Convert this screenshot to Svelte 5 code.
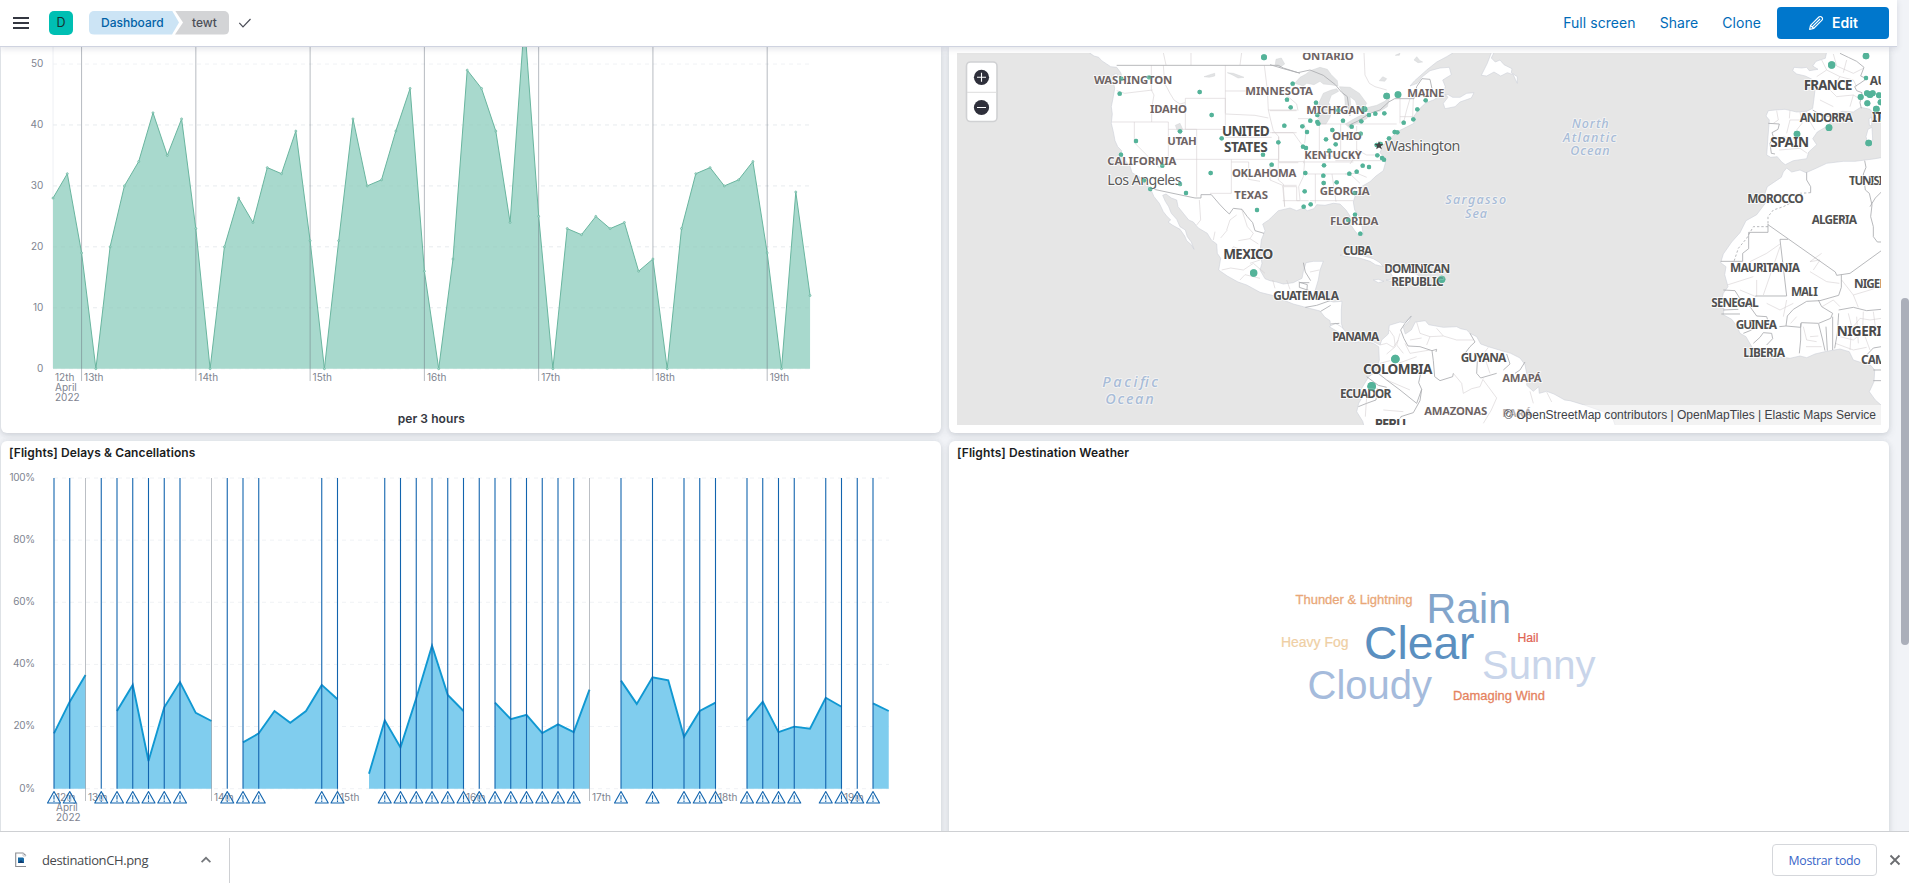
<script>
  // ---- Flight count chart ----
  const counts = [28,32,19,0,20,30,34,42,35,41,23,0,20,28,24,33,32,39,21,0,21,41,30,31,39,46,16,0,18,49,46,39,24,57,25,0,23,22,25,23,24,16,18,0,23,32,33,30,31,34,19,0,29,12];
  const cx = (i) => 53 + i * 14.284;
  const cy = (v) => 368.7 - v * 6.093;
  const countLine = counts.map((v, i) => `${cx(i).toFixed(1)},${cy(v).toFixed(1)}`).join(' ');
  const countArea = `53,368.7 ${countLine} ${cx(53)},368.7`;
  const days = [[2, '13th'], [10, '14th'], [18, '15th'], [26, '16th'], [34, '17th'], [42, '18th'], [50, '19th']];

  // ---- Delays chart ----
  const dx = (i) => 54 + i * 15.75;
  const dy = (v) => 788.7 - v * 3.107;
  const segments = [
    [0, [17.8, 28, 36.6]],
    [4, [25, 33.4, 8.9, 26.2, 34.3, 24.4, 21.8]],
    [12, [14.9, 17.8, 25, 21.2, 25, 33.4, 28.8]],
    [20, [4.8, 22, 13.3, 29.1, 46, 30.2, 25]],
    [28, [27.7, 22.4, 23.8, 17.9, 20.7, 18.2, 31.9]],
    [36, [34.8, 27.3, 35.9, 34.9, 16.7, 25, 27.7]],
    [44, [21.9, 28, 18.2, 20, 19.3, 29.3, 26.4]],
    [52, [27.5, 25]]
  ].map(([start, vals]) => {
    const line = vals.map((v, i) => `${dx(start + i)},${dy(v).toFixed(1)}`).join(' ');
    return { line, area: `${dx(start)},788.7 ${line} ${dx(start + vals.length - 1)},788.7` };
  });
  const alerts = [0,1,3,4,5,6,7,8,11,12,13,17,18,21,22,23,24,25,26,27,28,29,30,31,32,33,36,38,40,41,42,44,45,46,47,49,50,51,52];

  // ---- Map: geometry is stored per tile at 3x scale ----
  const tiles = { w: [950, 40], e: [1270, 40], s: [1270, 230], a: [1640, 40] };
  const pt = (t, x, y) => [tiles[t][0] + x / 3, tiles[t][1] + y / 3];
  const ring = (...parts) =>
    parts
      .map(([t, str]) => str.trim().split(/\s+/).map((p) => {
        const [x, y] = p.split(',').map(Number);
        return pt(t, x, y).map((n) => n.toFixed(1)).join(',');
      }).join(' '))
      .join(' ');

  const land = [
    ring(
      ['w', '415,36 432,48 446,52 455,62 470,72 482,80 500,82 512,98 516,112 508,118 500,100 490,104 494,116 490,125 494,145 490,170 484,200 487,222 484,250 490,275 495,302 503,320 515,332 512,342 522,358 540,378 546,398 570,412 590,430 602,448 612,470 628,490 640,515 650,528 662,540 654,546 668,556 690,568 704,588 710,602 724,614 732,628 724,606 712,590 706,570 690,560 680,538 664,520 656,500 646,484 638,466 648,462 664,474 680,480 684,500 700,520 716,540 730,546 745,564 772,580 784,600 800,612 802,640 812,655 806,690 832,708 864,726 890,735 930,757 966,766 1000,780 1030,792 1060,800'],
      ['s', '118,235 150,243 165,262 180,272 182,292 205,302 220,300 214,280 214,240 216,214 190,216 150,205 124,204 136,180 145,150 150,120 160,94 130,94 108,98 100,125 96,145 70,158 40,162 20,156 0,152'],
      ['w', '945,716 930,690 936,670 930,640 934,600 945,572 938,552 956,540 985,512 1020,504 1040,512'],
      ['e', '80,512 100,504 112,512 132,506 140,494 165,496 190,490 210,492 228,510 240,528 242,554 254,572 266,586 280,584 276,560 268,530 254,510 250,486 258,460 274,440 300,425 318,408 340,392 346,370 342,350 330,338 338,318 348,306 366,290 380,276 400,266 432,250 430,232 445,210 466,190 490,180 515,165 535,164 548,172 570,172 590,160 612,158 604,174 570,186 555,200 525,206 520,190 534,172 520,158 526,140 518,120 544,104 538,82 510,84 480,92 455,112 442,130 420,138 434,122 470,90 500,66 530,50 550,38 550,20 -700,20']
    ),
    ring(['s', '178,290 196,280 214,290 232,310 250,322 275,318 300,330 330,345 335,330 355,312 358,286 390,276 402,278 424,258 418,272 400,292 406,312 424,300 436,276 466,272 476,284 520,292 560,290 572,296 590,300 600,310 620,320 632,342 655,350 688,360 722,370 750,384 765,404 772,440 770,466 790,484 806,470 808,490 830,484 852,492 884,510 900,512 940,524 1000,545 1030,570 1040,600 285,600 278,574 260,545 266,520 280,496 272,480 296,440 318,425 328,390 326,350 310,340 280,332 254,338 225,318']),
    ring(['e', '664,38 652,70 634,106 650,108 672,96 692,108 712,98 730,104 736,118 742,130 742,110 724,98 726,86 702,74 690,60 676,66 664,54 672,38']),
    ring(['s', '210,76 225,70 250,72 275,76 310,86 330,98 340,110 316,104 300,94 268,84 235,80']),
    ring(['s', '345,118 390,118 440,132 460,150 430,158 405,150 370,156 348,150 372,146 360,126']),
    ring(['s', '310,150 325,148 342,154 325,158']),
    ring(['a', '560,36 556,55 528,64 518,78 534,88 508,92 500,82 485,84 462,82 458,92 470,102 496,108 516,118 526,142 522,175 518,205 500,214 470,216 435,208 405,210 385,212 378,228 388,240 384,290 380,345 392,352 412,350 425,366 436,374 460,362 500,356 506,336 530,314 518,296 532,276 556,262 580,240 586,222 606,214 640,216 662,202 690,208 712,236 726,250 740,250 740,36']),
    ring(['a', '684,268 696,262 698,300 684,312 678,290']),
    ring(['a', '687,236 695,232 695,258 688,256']),
    ring(['a', '740,350 700,357 675,360 645,364 610,364 560,370 530,384 498,398 480,390 455,396 440,384 430,396 424,412 382,440 372,468 376,490 350,524 318,542 300,578 275,606 250,642 242,668 258,680 254,704 264,740 250,760 244,782 230,794 252,806 250,824 275,838 290,858 300,880 318,890 338,925 372,936 402,958 420,950 450,955 480,948 500,953 525,942 560,934 600,927 628,935 640,960 665,968 692,976 704,990 702,1025 688,1055 706,1080 740,1110'])
  ];
  const water = [
    ring(['e', '74,130 90,112 108,102 120,92 150,82 172,88 184,104 202,122 204,138 182,134 160,132 150,124 132,134 110,130 100,138']),
    ring(['e', '150,252 144,230 142,210 148,186 160,160 184,150 200,146 206,154 184,166 176,188 186,206 180,232 168,252']),
    ring(['e', '208,140 240,142 268,160 290,190 280,206 262,200 256,182 240,170 244,212 232,222 226,200 224,170']),
    ring(['e', '226,252 250,238 280,222 300,222 290,236 262,250 236,262']),
    ring(['e', '286,204 320,196 344,184 360,170 352,200 330,214 292,216']),
    ring(['e', '18,58 34,54 44,72 30,82 16,74']),
    ring(['e', '328,122 338,110 350,116 344,124']),
    ring(['e', '432,60 440,50 450,62 458,66 444,68']),
    ring(['e', '376,46 390,40 388,46']),
    ring(['w', '676,256 690,250 698,268 692,282 682,272']),
    ring(['w', '762,110 780,104 794,100 794,108 778,112']),
    ring(['w', '832,98 850,100 866,106 882,112 864,114 846,104'])
  ];
  const line = (t, d) => ({ d, o: tiles[t] });
  const borders = [
    line('w', 'M500,76 H985 L1000,84 1050,100 M612,448 L735,474 753,474 753,464 784,464 808,492 825,510 838,522 850,505 876,508 892,530 908,548 915,572 942,580 M1078,728 H1048 V742 L1078,752'),
    line('e', 'M0,74 L40,86 84,98 120,90 160,106 196,134 214,156 232,170 240,228 M236,256 L262,244 300,220 330,210 356,186 374,176 H432 L440,140 456,116 480,118 486,146'),
    line('s', 'M100,98 L106,126 122,152 M86,156 L112,164 110,190 M106,232 L140,226 180,212 M152,244 L182,226 M182,282 L208,280'),
    line('s', 'M424,258 L405,280 392,300 402,326 414,348 450,350 486,362 490,392 494,440 510,452 548,440 550,430 M486,362 L500,358 498,366 M600,310 L615,336 600,350 585,370 M622,394 L620,430 632,444 680,430 M710,372 L720,402 700,420 M765,396 L750,420 735,430 M318,425 L350,450 390,480 440,520 455,478 446,458 452,430 M290,440 L325,466 350,472 M265,530 L290,520 318,510 322,475 M455,478 L450,512 430,548 392,560 M395,560 L360,590'),
    line('a', 'M385,250 L418,252 414,268 396,278 400,290 390,310 394,340 405,342 M518,210 L545,226 585,232 M500,397 L500,420 512,440 512,458 M384,552 V577 H326 V626 L308,640 V664 H242 M384,554 L586,696 590,706 630,700 724,632 M420,598 H444 M420,598 L440,768 M346,768 H440 M674,362 L678,382 670,402 676,450 688,460 696,495 692,530 700,560 700,590 712,606 724,606 M604,704 V742 L596,766 540,782 500,784 460,808 442,828 438,858 418,860 M250,750 L285,752 300,776 330,800 350,828 380,830 388,856 M244,822 H300 M250,810 L295,808 M310,880 L330,872 350,860 M340,910 L360,892 370,878 395,880 398,896 380,915 M438,858 L482,862 484,848 536,850 572,835 578,820 545,800 535,780 M482,850 V900 L478,940 M536,852 L548,900 555,932 M558,860 L562,932 M578,830 L578,930 M596,820 L592,880 584,925 M596,810 L640,802 680,812 724,808 M724,920 L700,924 680,945 M700,990 H724 M700,1022 H724 M690,500 L706,474 724,456 M600,40 L625,52 650,64 672,82 662,108 680,116 660,130 644,140 650,152 666,158 660,188 664,205')
  ];
  const minor = [
    line('w', 'M640,38 L648,75 M723,38 V75 M875,38 L870,75 M500,152 L524,160 608,150 M604,76 V150 L612,165 605,205 V246 M640,76 L644,130 660,160 672,180 690,192 705,188 M486,246 H655 M553,246 V308 L630,385 M655,246 V358 M706,175 H826 M706,175 V268 H826 V175 M826,76 V220 M826,153 H950 M826,222 L915,226 955,234 M826,292 L965,292 M655,268 H740 M740,268 V470 M640,358 H985 M844,358 V460 H780 M844,366 H896 V418 L930,424 M985,358 V420 L1000,432 V438 L1004,500 M943,76 L952,150 955,210 962,240 970,272 986,290 V358 M955,210 H1040 M966,278 H1040 M986,368 H1045 M1002,440 H1040 V482 H1076 M748,480 L752,540 740,555 M790,600 L795,575 M812,594 L832,570 M830,570 L840,540 860,525 M875,508 L892,560 910,580 900,596 865,602 M900,596 L925,612 M840,640 L850,620 875,630 M815,690 L842,684 880,690 910,670 945,700 M870,720 L885,704 930,715 M925,625 L930,660 900,670 M968,720 L975,745 M1010,720 L1020,748'),
    line('e', 'M282,38 L285,105 298,130 315,140 350,150 M46,150 L54,170 80,192 84,212 M0,212 H80 M0,278 H70 L84,298 100,320 110,340 100,370 M84,236 H120 M102,250 L108,276 104,310 M148,256 V340 L130,350 M148,252 H236 M212,252 V330 L195,350 160,345 M260,258 V330 L240,345 M260,252 H380 M390,176 V250 M420,176 L410,210 400,250 M430,176 L428,230 M390,230 H430 M196,362 H340 M104,366 H250 M100,402 H240 L270,430 M136,402 V490 M186,402 L198,485 M120,482 H250 M26,290 V365 M26,365 H104 L100,410 86,440 90,480 M0,370 V420 L38,436 H80 M38,438 L44,500 M38,482 H90 M262,330 L290,345 330,345 M255,350 L240,372 M225,402 L262,400 290,412'),
    line('s', 'M120,126 L148,120 M330,345 L350,340 370,352 385,330 M358,300 L372,320 376,350 350,372 M390,310 L380,345 400,370 M330,400 L360,392 M440,276 L450,310 480,320 470,345 M480,320 L520,318 560,330 610,330 M420,330 L455,324 M500,295 L520,318 M550,430 L575,460 580,490 605,476 630,470 640,445 M655,352 L640,372 650,400 660,430 M640,450 L680,504 664,540 640,580 M350,450 L420,480 M405,340 L420,370 480,360 M290,500 L286,560 M400,545 L340,540 M780,484 L790,520 M830,486 L845,516 M385,400 L440,380'),
    line('a', 'M410,212 L415,240 400,250 M450,212 L448,235 M480,216 L486,250 470,270 M400,300 L430,290 470,300 M418,330 L480,325 502,340 M500,214 L510,245 525,270 M440,280 L450,240 500,240 M545,60 L560,90 530,110 M580,42 L590,78 640,100 670,85 M560,90 L600,110 580,140 M530,130 L560,140 590,170 M600,110 L640,120 650,140 M590,170 L640,165 665,180 M540,180 L580,200 M640,165 L630,200 M620,60 L610,98 M420,612 L380,640 330,665 M420,620 L370,765 M350,720 V770 M262,735 L340,710 M300,750 L348,770 M520,690 L540,660 510,665 545,640 M510,695 L560,725 598,730 M605,720 L640,765 690,750 724,738 M640,765 L655,802 M605,860 H640 L660,835 690,840 724,835 M600,890 L640,900 665,880 700,885 724,870 M625,820 L635,860 630,930 M670,815 L668,870 690,930 M650,830 L655,910 M700,815 L706,860 M586,910 L640,930 680,922 M440,780 L430,830 M380,790 L420,810 460,790 M546,800 L580,780 600,800 M490,860 L500,900 530,905 M510,890 L535,888 M498,920 H545 M452,850 L470,830')
  ];
  const dashed = [line('a', 'M512,458 L480,460 466,482 430,500 400,510 384,530 V552 M384,560 H340 L320,595 295,625 282,664')];

  // [tile, x0, x1, baseline, text, kind]
  const labels = [
    ['w', 432, 667, 131, 'WASHINGTON', 'state'], ['w', 600, 711, 220, 'IDAHO', 'state'], ['w', 652, 740, 316, 'UTAH', 'state'],
    ['w', 472, 679, 376, 'CALIFORNIA', 'state'], ['w', 472, 695, 435, 'Los Angeles', 'city'], ['w', 846, 1039, 412, 'OKLAHOMA', 'state'],
    ['w', 853, 954, 476, 'TEXAS', 'state'], ['w', 886, 1089, 164, 'MINNESOTA', 'state'], ['w', 816, 959, 288, 'UNITED', 'big'],
    ['w', 822, 953, 335, 'STATES', 'big'], ['w', 820, 970, 658, 'MEXICO', 'big'],
    ['w', 457, 624, 1042, 'Pacific', 'sea large'], ['w', 466, 611, 1092, 'Ocean', 'sea large'],
    ['e', 97, 251, 61, 'ONTARIO', 'state'], ['e', 412, 523, 171, 'MAINE', 'state'], ['e', 109, 285, 221, 'MICHIGAN', 'state'],
    ['e', 187, 275, 299, 'OHIO', 'state'], ['e', 103, 276, 357, 'KENTUCKY', 'state'], ['e', 149, 299, 466, 'GEORGIA', 'state'],
    ['e', 180, 325, 556, 'FLORIDA', 'state'], ['e', 345, 571, 333, 'Washington', 'city'],
    ['e', 526, 708, 493, 'Sargasso', 'sea'], ['e', 585, 651, 533, 'Sea', 'sea'],
    ['s', 219, 307, 76, 'CUBA', 'mid'], ['s', 343, 541, 128, 'DOMINICAN', 'mid'], ['s', 364, 521, 167, 'REPUBLIC', 'mid'],
    ['s', 10, 207, 210, 'GUATEMALA', 'mid'], ['s', 187, 328, 333, 'PANAMA', 'mid'], ['s', 279, 487, 432, 'COLOMBIA', 'big'],
    ['s', 210, 364, 503, 'ECUADOR', 'mid'], ['s', 572, 709, 396, 'GUYANA', 'mid'], ['s', 697, 815, 456, 'AMAPÁ', 'state'],
    ['s', 463, 652, 556, 'AMAZONAS', 'state'], ['s', 697, 786, 560, 'PARÁ', 'state'], ['s', 314, 409, 598, 'PERU', 'big'],
    ['a', -205, -94, 264, 'North', 'sea'], ['a', -231, -71, 305, 'Atlantic', 'sea'], ['a', -209, -91, 346, 'Ocean', 'sea'],
    ['a', 491, 637, 151, 'FRANCE', 'big'], ['a', 479, 639, 246, 'ANDORRA', 'mid'], ['a', 391, 507, 321, 'SPAIN', 'big'],
    ['a', 689, 835, 134, 'AUSTRIA', 'mid'], ['a', 696, 787, 246, 'ITALY', 'big'], ['a', 627, 750, 435, 'TUNISIA', 'mid'],
    ['a', 322, 491, 490, 'MOROCCO', 'mid'], ['a', 515, 651, 552, 'ALGERIA', 'mid'], ['a', 270, 480, 697, 'MAURITANIA', 'mid'],
    ['a', 453, 534, 768, 'MALI', 'mid'], ['a', 642, 742, 743, 'NIGER', 'mid'], ['a', 214, 356, 801, 'SENEGAL', 'mid'],
    ['a', 287, 411, 866, 'GUINEA', 'mid'], ['a', 590, 752, 888, 'NIGERIA', 'big'], ['a', 310, 435, 951, 'LIBERIA', 'mid'],
    ['a', 663, 855, 971, 'CAMEROON', 'mid']
  ].map(([t, x0, x1, y, text, kind]) => {
    const [x, yy] = pt(t, x0, y);
    return { x, y: yy, w: (x1 - x0) / 3, text, kind };
  });

  const small = {
    w: '514,116 597,112 509,161 749,156 785,225 690,274 558,303 513,344 637,377 582,421 690,432 601,447 708,459 782,399 815,295 939,344 965,374 985,307 1003,257 1011,179 1022,202 1028,131 921,510',
    e: '138,188 205,211 142,225 121,242 142,246 145,251 97,259 111,276 219,242 245,260 274,244 297,225 316,221 343,220 401,248 430,238 442,208 467,181 374,276 382,277 357,295 187,270 168,298 197,313 178,332 272,281 99,320 108,324 162,376 106,399 160,407 161,429 200,427 238,401 260,395 278,377 297,381 104,454 101,500 122,493 254,459 255,524 235,540 271,581 322,346 336,354 342,359 320,315 332,312',
    a: '678,114'
  };
  const large = [
    ['w', 942, 52, 9], ['w', 911, 699, 11], ['e', 350, 168, 10], ['e', 384, 164, 10], ['e', 283, 208, 9],
    ['s', 515, 148, 11], ['s', 376, 387, 13], ['s', 305, 469, 13],
    ['a', 575, 75, 11], ['a', 678, 48, 10], ['a', 662, 171, 9], ['a', 681, 160, 9], ['a', 690, 164, 10], ['a', 698, 160, 9], ['a', 717, 166, 9],
    ['a', 682, 190, 9], ['a', 722, 187, 9], ['a', 709, 207, 10], ['a', 567, 263, 10], ['a', 471, 282, 10], ['a', 686, 309, 10]
  ];
  const dots = [
    ...Object.entries(small).flatMap(([t, s]) => s.split(' ').map((p) => [...pt(t, ...p.split(',').map(Number)), 2.2])),
    ...large.map(([t, x, y, r]) => [...pt(t, x, y), r / 3])
  ];

  const words = [
    ['Thunder & Lightning', 1295.5, 604, 13.3, 117, '#e9a778', 0.3], ['Rain', 1426.5, 622.8, 42, 84.5, '#83a5cb', 0],
    ['Heavy Fog', 1281, 646.5, 13.8, 67.5, '#efcfa4', 0.2], ['Clear', 1364, 658.8, 46.5, 110.5, '#5a8fc0', 0],
    ['Hail', 1517.5, 641.7, 12, 21, '#e06352', 0.2], ['Sunny', 1482, 678.8, 41.5, 113.5, '#c9d5ea', 0],
    ['Cloudy', 1307.5, 699.2, 41.5, 124.5, '#a5bbdc', 0], ['Damaging Wind', 1453, 699.7, 13.3, 92, '#e5835f', 0.3]
  ];
</script>

<div class="app">
  <header>
    <svg class="menu" width="16" height="16" viewBox="0 0 16 16"><path d="M0 2h16v2H0zM0 7h16v2H0zM0 12h16v2H0z" fill="#343741" /></svg>
    <span class="avatar">D</span>
    <nav>
      <span class="crumb first">Dashboard</span><span class="crumb last">tewt</span>
    </nav>
    <svg class="check" width="14" height="12" viewBox="0 0 14 12"><path d="M1.3 5.8 5 9.8 12.5 2" fill="none" stroke="#4a4d57" stroke-width="1.2" /></svg>
    <div class="actions">
      <a>Full screen</a><a>Share</a><a>Clone</a>
      <button class="edit">
        <svg width="16" height="16" viewBox="0 0 16 16" fill="none" stroke="#fff" stroke-width="1.1" stroke-linejoin="round">
          <path d="M1.6 14.4 2.5 10.4 10.9 2a1.8 1.8 0 0 1 2.6 0l.5.5a1.8 1.8 0 0 1 0 2.6L5.6 13.5zM2.5 10.4l3.1 3.1M4.5 11.6l7.6-7.6" />
        </svg>
        Edit
      </button>
    </div>
  </header>

  <main>
    <section class="panel">
      <svg class="axes" width="940" height="386" viewBox="1 47 940 386">
        {#each [50, 40, 30, 20, 10, 0] as v}
          <line class="grid" x1="53" x2="810" y1={cy(v)} y2={cy(v)} />
          <text x="43.3" y={cy(v) + 3} text-anchor="end">{v}</text>
        {/each}
        <line x1="53" x2="53" y1="47" y2="368" stroke="#eef0f4" />
        <polygon points={countArea} fill="#a8d9cd" />
        {#each [40, 30, 20, 10] as v}
          <line x1="53" x2="810" y1={cy(v)} y2={cy(v)} stroke="#7d9c9a" stroke-opacity=".07" stroke-dasharray="4 4" />
        {/each}
        {#each days as [i, label]}
          <line x1={cx(i)} x2={cx(i)} y1="47" y2="381" stroke="#69707d" stroke-opacity=".48" />
          <text x={cx(i) + 2.5} y="381">{label}</text>
        {/each}
        <polyline points={countLine} fill="none" stroke="#69b59f" stroke-width="1" />
        {#each counts as v, i}
          <circle cx={cx(i)} cy={cy(v)} r="1" fill="#b5dfd5" stroke="#69b59f" stroke-width=".7" />
        {/each}
        <text x="55" y="381">12th</text><text x="55" y="391">April</text><text x="55" y="401">2022</text>
        <text class="axis-title" x="431.3" y="422.5" text-anchor="middle">per 3 hours</text>
      </svg>
    </section>

    <section class="panel">
      <svg class="map" width="940" height="386" viewBox="949 47 940 386">
        <defs><clipPath id="viewport"><rect x="957" y="53" width="924" height="372" /></clipPath></defs>
        <g clip-path="url(#viewport)">
          <rect x="957" y="53" width="924" height="372" fill="#e6e6e6" />
          {#each land as p}<polygon points={p} fill="#fff" stroke="#cdd0d8" stroke-width=".6" stroke-linejoin="round" />{/each}
          {#each water as p}<polygon points={p} fill="#e2e3e4" stroke="#ccced2" stroke-width=".4" />{/each}
          {#each minor as l}<path d={l.d} transform="translate({l.o[0]} {l.o[1]}) scale(.33333)" class="minor" />{/each}
          {#each borders as l}<path d={l.d} transform="translate({l.o[0]} {l.o[1]}) scale(.33333)" class="border" />{/each}
          {#each dashed as l}<path d={l.d} transform="translate({l.o[0]} {l.o[1]}) scale(.33333)" class="border" stroke-dasharray="7 6" />{/each}
          {#each dots as [x, y, r]}<circle cx={x} cy={y} {r} fill="#54b399" />{/each}
          {#each labels as l}<text class={l.kind} x={l.x} y={l.y} textLength={l.w}>{l.text}</text>{/each}
          {#each dots as [x, y, r]}<circle cx={x} cy={y} {r} fill="#54b399" fill-opacity=".75" />{/each}
          <path d="M1379 141l1.2 3 3.3.1-2.6 2 .9 3.1-2.8-1.8-2.8 1.8.9-3.1-2.6-2 3.3-.1z" fill="#444" />
          <rect x="1500" y="405" width="381" height="20" fill="#fff" fill-opacity=".5" />
          <text class="attribution" x="1504" y="419" textLength="372" lengthAdjust="spacingAndGlyphs">© OpenStreetMap contributors | OpenMapTiles | Elastic Maps Service</text>
        </g>
        <g class="zoom">
          <rect x="966.5" y="62" width="30.5" height="59.5" rx="4" fill="#fff" stroke="#d0d1d3" stroke-width="1.6" />
          <line x1="967" x2="996.5" y1="92.3" y2="92.3" stroke="#ddd" />
          <circle cx="981.5" cy="77.3" r="7.6" fill="#2f303b" /><circle cx="981.5" cy="107.5" r="7.6" fill="#2f303b" />
          <path d="M977 77.3h9M981.5 72.8v9M977 107.5h9" stroke="#fff" stroke-width="1.1" />
        </g>
      </svg>
    </section>

    <section class="panel">
      <h2>[Flights] Delays &amp; Cancellations</h2>
      <svg class="axes" width="940" height="366" viewBox="1 465 940 366">
        {#each [100, 80, 60, 40, 20, 0] as v}
          <line class="grid" x1="54" x2="889" y1={dy(v)} y2={dy(v)} />
          <text class="percent" x="34.9" y={dy(v) + 2.8} text-anchor="end">{v}%</text>
        {/each}
        {#each segments as s}
          <polygon points={s.area} fill="#80cdee" />
          <polyline points={s.line} fill="none" stroke="#1098d2" stroke-width="1.9" />
        {/each}
        {#each days as [i, label]}
          <line x1={dx(i)} x2={dx(i)} y1="478" y2="801" stroke="#69707d" stroke-opacity=".45" />
          <text x={dx(i) + 2.5} y="801">{label}</text>
        {/each}
        <text x="56" y="801">12th</text><text x="56" y="811">April</text><text x="56" y="821">2022</text>
        {#each alerts as i}
          <line x1={dx(i)} x2={dx(i)} y1="478" y2="788.7" stroke="#1264ae" stroke-width="1.1" />
          <g transform="translate({dx(i)} 797.5)">
            <path d="M0 -6 6.5 5.5H-6.5z" fill="#e6f6fc" fill-opacity=".4" stroke="#1264ae" stroke-width="1.1" stroke-linejoin="round" />
            <path d="M0 -2.3V2M0 3v1.4" stroke="#1264ae" stroke-width="1.1" />
          </g>
        {/each}
      </svg>
    </section>

    <section class="panel">
      <h2>[Flights] Destination Weather</h2>
      <svg class="cloud" width="940" height="366" viewBox="949 465 940 366">
        {#each words as [text, x, y, size, w, fill, weight]}
          <text {x} {y} font-size={size} textLength={w} lengthAdjust="spacingAndGlyphs" {fill} stroke={fill} stroke-width={weight}>{text}</text>
        {/each}
      </svg>
    </section>
    <div class="thumb"></div>
  </main>

  <footer>
    <div class="download">
      <svg width="12" height="16" viewBox="0 0 12 16">
        <path d="M11 14.5H.7V1H8l3 2.7" fill="#fff" stroke="#8b8d92" stroke-width="1.1" />
        <path d="M8 1v3h3" fill="none" stroke="#c9cbd0" /><path d="M3 5.5h5v1l1-1v5.5H3z" fill="#176aa5" /><path d="m3 11 3-3 3 3z" fill="#123c70" />
      </svg>
      <span>destinationCH.png</span>
      <svg class="caret" width="12" height="8" viewBox="0 0 12 8"><path d="m1.6 6.2 4.4-4.4 4.4 4.4" fill="none" stroke="#74777b" stroke-width="1.7" /></svg>
    </div>
    <button class="show">Mostrar todo</button>
    <svg class="close" width="12" height="12" viewBox="0 0 12 12"><path d="m1.5 1.5 9 9M10.5 1.5l-9 9" stroke="#6b6d70" stroke-width="1.8" /></svg>
  </footer>
</div>

<style>
  :global(body) { margin: 0; background: #f1f3f7; overflow: hidden; }
  .app { width: 1909px; height: 888px; display: flex; flex-direction: column; overflow: hidden; font-family: Inter, sans-serif; color: #343741; }
  header { position: relative; z-index: 2; box-sizing: border-box; width: 1897px; height: 47px; flex: none; display: flex; align-items: center; padding: 0 8px 1px 13px; background: #fff; border-bottom: 1px solid #cfd3e0; box-shadow: 0 2px 6px rgba(60, 65, 90, .14); }
  .menu { margin-right: 20px; }
  .avatar { width: 24px; height: 24px; border-radius: 5px; background: #00bfb3; color: #16322f; font-size: 12.5px; line-height: 24px; text-align: center; margin-right: 16px; }
  nav { display: flex; font-size: 12px; font-weight: 500; line-height: 24px; }
  .crumb { box-sizing: border-box; height: 24px; white-space: nowrap; }
  .first { width: 94px; padding-left: 12px; background: #cce4f5; color: #0061a6; border-radius: 5px 0 0 5px; clip-path: polygon(0 0, 83px 0, 90px 50%, 83px 100%, 0 100%); }
  .last { width: 54px; margin-left: -8px; padding-left: 17px; background: #d3d4d6; color: #4c4f58; border-radius: 0 5px 5px 0; clip-path: polygon(0 0, 100% 0, 100% 100%, 0 100%, 8px 50%); }
  .check { margin-left: 9px; }
  .actions { margin-left: auto; display: flex; align-items: center; font-size: 14px; color: #006bb8; }
  .actions a { margin-right: 24px; letter-spacing: .06px; }
  .actions a:nth-of-type(3) { margin-right: 16px; }
  button { font-family: inherit; cursor: pointer; }
  .edit { display: flex; align-items: center; justify-content: center; gap: 8px; width: 112px; height: 32px; padding: 0; border: 0; border-radius: 4px; background: #0077cc; color: #fff; font-size: 14px; font-weight: 600; }
  main { position: relative; flex: none; height: 784px; display: grid; grid-template-columns: 940px 940px; grid-template-rows: 386px 400px; gap: 8px; padding-left: 1px; overflow: hidden; background: #f1f3f7; }
  .panel { background: #fff; border-radius: 6px; box-shadow: 0 1px 5px rgba(60, 65, 80, .12), 0 3px 8px rgba(60, 65, 80, .1); }
  .panel:nth-child(-n + 2) { border-radius: 0 0 6px 6px; }
  svg { display: block; flex: none; }
  h2 { margin: 0; height: 24px; padding-left: 8px; font-size: 12px; line-height: 24px; font-weight: 600; letter-spacing: .1px; color: #1a1c21; }
  .axes text { font: 10px Inter, sans-serif; fill: #7e8490; }
  .axes .percent { letter-spacing: -.25px; }
  .axes .axis-title { font-size: 12px; font-weight: 600; letter-spacing: .08px; fill: #343741; }
  .grid { stroke: #f0f2f5; stroke-dasharray: 4 4; }
  .minor { fill: none; stroke: #d3cdd0; stroke-width: 1.7; stroke-linejoin: round; }
  .border { fill: none; stroke: #a9abae; stroke-width: 2.5; stroke-linejoin: round; }
  .map text { font-family: "Noto Sans", sans-serif; paint-order: stroke; stroke: #fff; stroke-opacity: .75; stroke-width: 2px; stroke-linejoin: round; }
  .map .state { font-size: 11.4px; font-weight: 700; fill: #6e6465; }
  .map .mid { font-size: 12px; font-weight: 700; fill: #505050; }
  .map .big { font-size: 13.6px; font-weight: 700; fill: #4a4a4a; }
  .map .city { font-size: 14.3px; fill: #5b5b5b; }
  .map .sea { font-size: 12.5px; font-style: italic; font-weight: 500; fill: #a8bcd8; stroke-opacity: .5; }
  .map .large { font-size: 14.5px; }
  .map .attribution { font: 12px "Liberation Sans", sans-serif; fill: #404247; stroke: none; }
  .cloud text { font-family: "Liberation Sans", sans-serif; }
  .thumb { position: absolute; left: 1901px; top: 251px; width: 8px; height: 347px; border-radius: 4px; background: #abafba; }
  footer { position: relative; z-index: 3; box-sizing: border-box; height: 57px; flex: none; display: flex; align-items: center; padding: 0 8px 0 0; background: #fff; border-top: 1px solid #ced0d3; font-family: "Open Sans", "Noto Sans", sans-serif; }
  .download { box-sizing: border-box; width: 230px; height: 45px; display: flex; align-items: center; padding-left: 15px; border-right: 1px solid #ced0d3; font-size: 13px; color: #47494d; }
  .download span { margin-left: 15px; width: 106px; white-space: nowrap; letter-spacing: -.37px; }
  .caret { margin-left: 52px; }
  .show { margin-left: auto; box-sizing: border-box; width: 105px; height: 32px; border: 1px solid #d5d7db; border-radius: 4px; background: #fff; color: #3765c8; font-size: 12.3px; font-weight: 500; letter-spacing: -.3px; padding: 0; }
  .close { margin-left: 12px; }
</style>
